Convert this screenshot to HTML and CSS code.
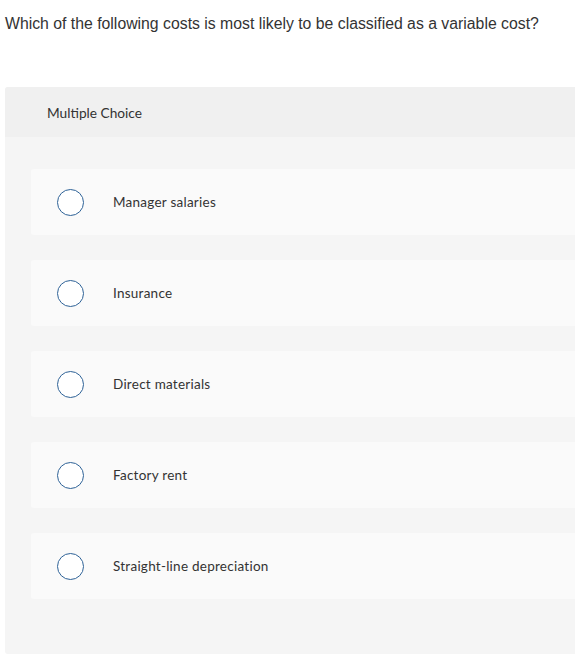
FILE: index.html
```html
<!DOCTYPE html>
<html>
<head>
<meta charset="utf-8">
<link rel="stylesheet" href="styles.css">
</head>
<body>
<div class="page">
  <p class="question">Which of the following costs is most likely to be classified as a variable cost?</p>
  <div class="panel">
    <div class="panel-header">Multiple Choice</div>
    <div class="panel-body">
      <div class="option"><span class="radio"></span><span class="label">Manager salaries</span></div>
      <div class="option"><span class="radio"></span><span class="label">Insurance</span></div>
      <div class="option"><span class="radio"></span><span class="label">Direct materials</span></div>
      <div class="option"><span class="radio"></span><span class="label">Factory rent</span></div>
      <div class="option"><span class="radio"></span><span class="label">Straight-line depreciation</span></div>
    </div>
  </div>
</div>
</body>
</html>
```
FILE: styles.css
```css
html, body {
  margin: 0;
  padding: 0;
  background: #ffffff;
  overflow: hidden;
}
.page {
  padding-left: 5px;
  width: 570px;
}
.question {
  margin: 0;
  padding-top: 14px;
  height: 73px;
  font-family: "Liberation Sans", Arial, sans-serif;
  font-size: 15.8px;
  line-height: 20px;
  color: #333333;
  white-space: nowrap;
}
.panel {
  background: #f5f5f5;
  border-radius: 3px 0 0 3px;
  padding-bottom: 55px;
}
.panel-header {
  background: #f0f0f0;
  height: 50px;
  display: flex;
  align-items: center;
  padding-left: 42px;
  font-family: Lato, "Noto Sans", sans-serif;
  font-size: 13.7px;
  color: #333333;
  border-radius: 3px 0 0 0;
}
.panel-body {
  padding: 32px 0 0 26px;
  display: flex;
  flex-direction: column;
  gap: 25px;
}
.option {
  background: #fafafa;
  border-radius: 3px 0 0 3px;
  height: 66px;
  display: flex;
  align-items: center;
  padding-left: 25px;
}
.radio {
  width: 25px;
  height: 25px;
  border: 1.5px solid #2e6297;
  border-radius: 50%;
  background: #ffffff;
  flex: none;
  margin-left: 1px;
}
.label {
  margin-left: 29px;
  font-family: Lato, "Noto Sans", sans-serif;
  font-size: 13.5px;
  letter-spacing: 0.25px;
  color: #333333;
}
```
